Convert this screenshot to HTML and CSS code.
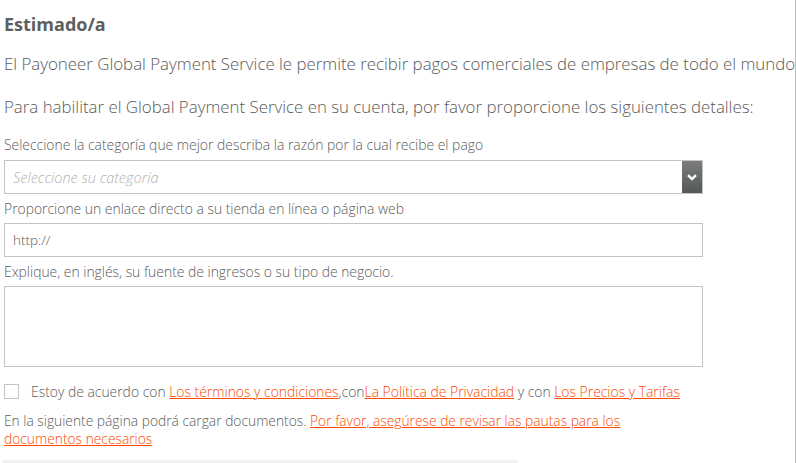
FILE: index.html
```html
<!DOCTYPE html>
<html lang="es">
<head>
<meta charset="utf-8">
<link rel="stylesheet" href="styles.css">
</head>
<body>
<div class="page">
  <h2 class="title">Estimado/a</h2>
  <p class="lead first">El Payoneer Global Payment Service le permite recibir pagos comerciales de empresas de todo el mundo</p>
  <p class="lead second">Para habilitar el Global Payment Service en su cuenta, por favor proporcione los siguientes detalles:</p>

  <label class="label l1">Seleccione la categoría que mejor describa la razón por la cual recibe el pago</label>
  <div class="select">
    <span class="placeholder">Seleccione su categoría</span>
    <span class="arrow">
      <svg width="10" height="7" viewBox="0 0 10 7"><path d="M1 1.2 L5 5 L9 1.2" fill="none" stroke="#fff" stroke-width="2.4"/></svg>
    </span>
  </div>

  <label class="label">Proporcione un enlace directo a su tienda en línea o página web</label>
  <div class="input">http://</div>

  <label class="label">Explique, en inglés, su fuente de ingresos o su tipo de negocio.</label>
  <div class="textarea"></div>

  <div class="agree">
    <span class="checkbox"></span>
    <span class="agree-text">Estoy de acuerdo con <a href="#">Los términos y condiciones</a>,con<a href="#">La Política de Privacidad</a> y con <a href="#">Los Precios y Tarifas</a></span>
  </div>

  <p class="note">En la siguiente página podrá cargar documentos. <a href="#">Por favor, asegúrese de revisar las pautas para los<br>documentos necesarios</a></p>

  <div class="footer-bar"></div>
</div>
</body>
</html>
```

FILE: styles.css
```css
html, body {
  margin: 0;
  padding: 0;
  background: #fff;
}
body {
  font-family: "Open Sans", "Noto Sans", sans-serif;
  color: #5a5a5a;
  width: 796px;
  height: 463px;
  overflow: hidden;
}
.page {
  box-sizing: border-box;
  width: 796px;
  height: 463px;
  padding: 0 0 0 4px;
  border-right: 1px solid #bfc2c5;
}
.title {
  margin: 0;
  padding-top: 12px;
  font-size: 18px;
  font-weight: 700;
  line-height: 24px;
  color: #5e5e5e;
}
.lead {
  margin: 0;
  font-size: 16.85px;
  font-weight: 300;
  line-height: 24px;
  white-space: nowrap;
}
.lead.first {
  margin-top: 16px;
}
.lead.second {
  margin-top: 19px;
}
.label {
  display: block;
  font-size: 13.9px;
  font-weight: 300;
  line-height: 18px;
  margin-top: 6px;
  margin-bottom: 5px;
  white-space: nowrap;
}
.label.l1 {
  margin-top: 17px;
  margin-bottom: 6px;
}
.select, .input, .textarea {
  box-sizing: border-box;
  width: 699px;
  border: 1px solid #c4c4c4;
  background: #fff;
}
.select {
  height: 34px;
  display: flex;
  align-items: center;
  justify-content: space-between;
}
.placeholder {
  padding-left: 8px;
  font-size: 14.5px;
  font-style: italic;
  font-weight: 300;
  color: #b0b0b0;
}
.arrow {
  width: 20px;
  height: 32px;
  background: linear-gradient(#7a7c7d, #555859);
  display: flex;
  align-items: center;
  justify-content: center;
}
.input {
  height: 34px;
  display: flex;
  align-items: center;
  padding-left: 8px;
  font-size: 13.5px;
  font-weight: 300;
}
.textarea {
  height: 81px;
  margin-top: 5px;
}
.agree {
  display: flex;
  align-items: flex-start;
  margin-top: 17px;
}
.checkbox {
  box-sizing: border-box;
  width: 15px;
  height: 15px;
  margin-top: 0;
  border: 1px solid #c4c4c4;
  margin-right: 12px;
}
.agree-text {
  font-size: 13.9px;
  font-weight: 300;
  line-height: 18px;
  margin-top: -1px;
  white-space: nowrap;
}
a {
  color: #ff4800;
  text-decoration: underline;
}
.note {
  margin: 11px 0 0 0;
  font-size: 13.8px;
  font-weight: 300;
  line-height: 18px;
}
.footer-bar {
  margin-top: 12px;
  width: 515px;
  height: 3px;
  background: #f1f1f1;
  margin-left: -1px;
}
```
